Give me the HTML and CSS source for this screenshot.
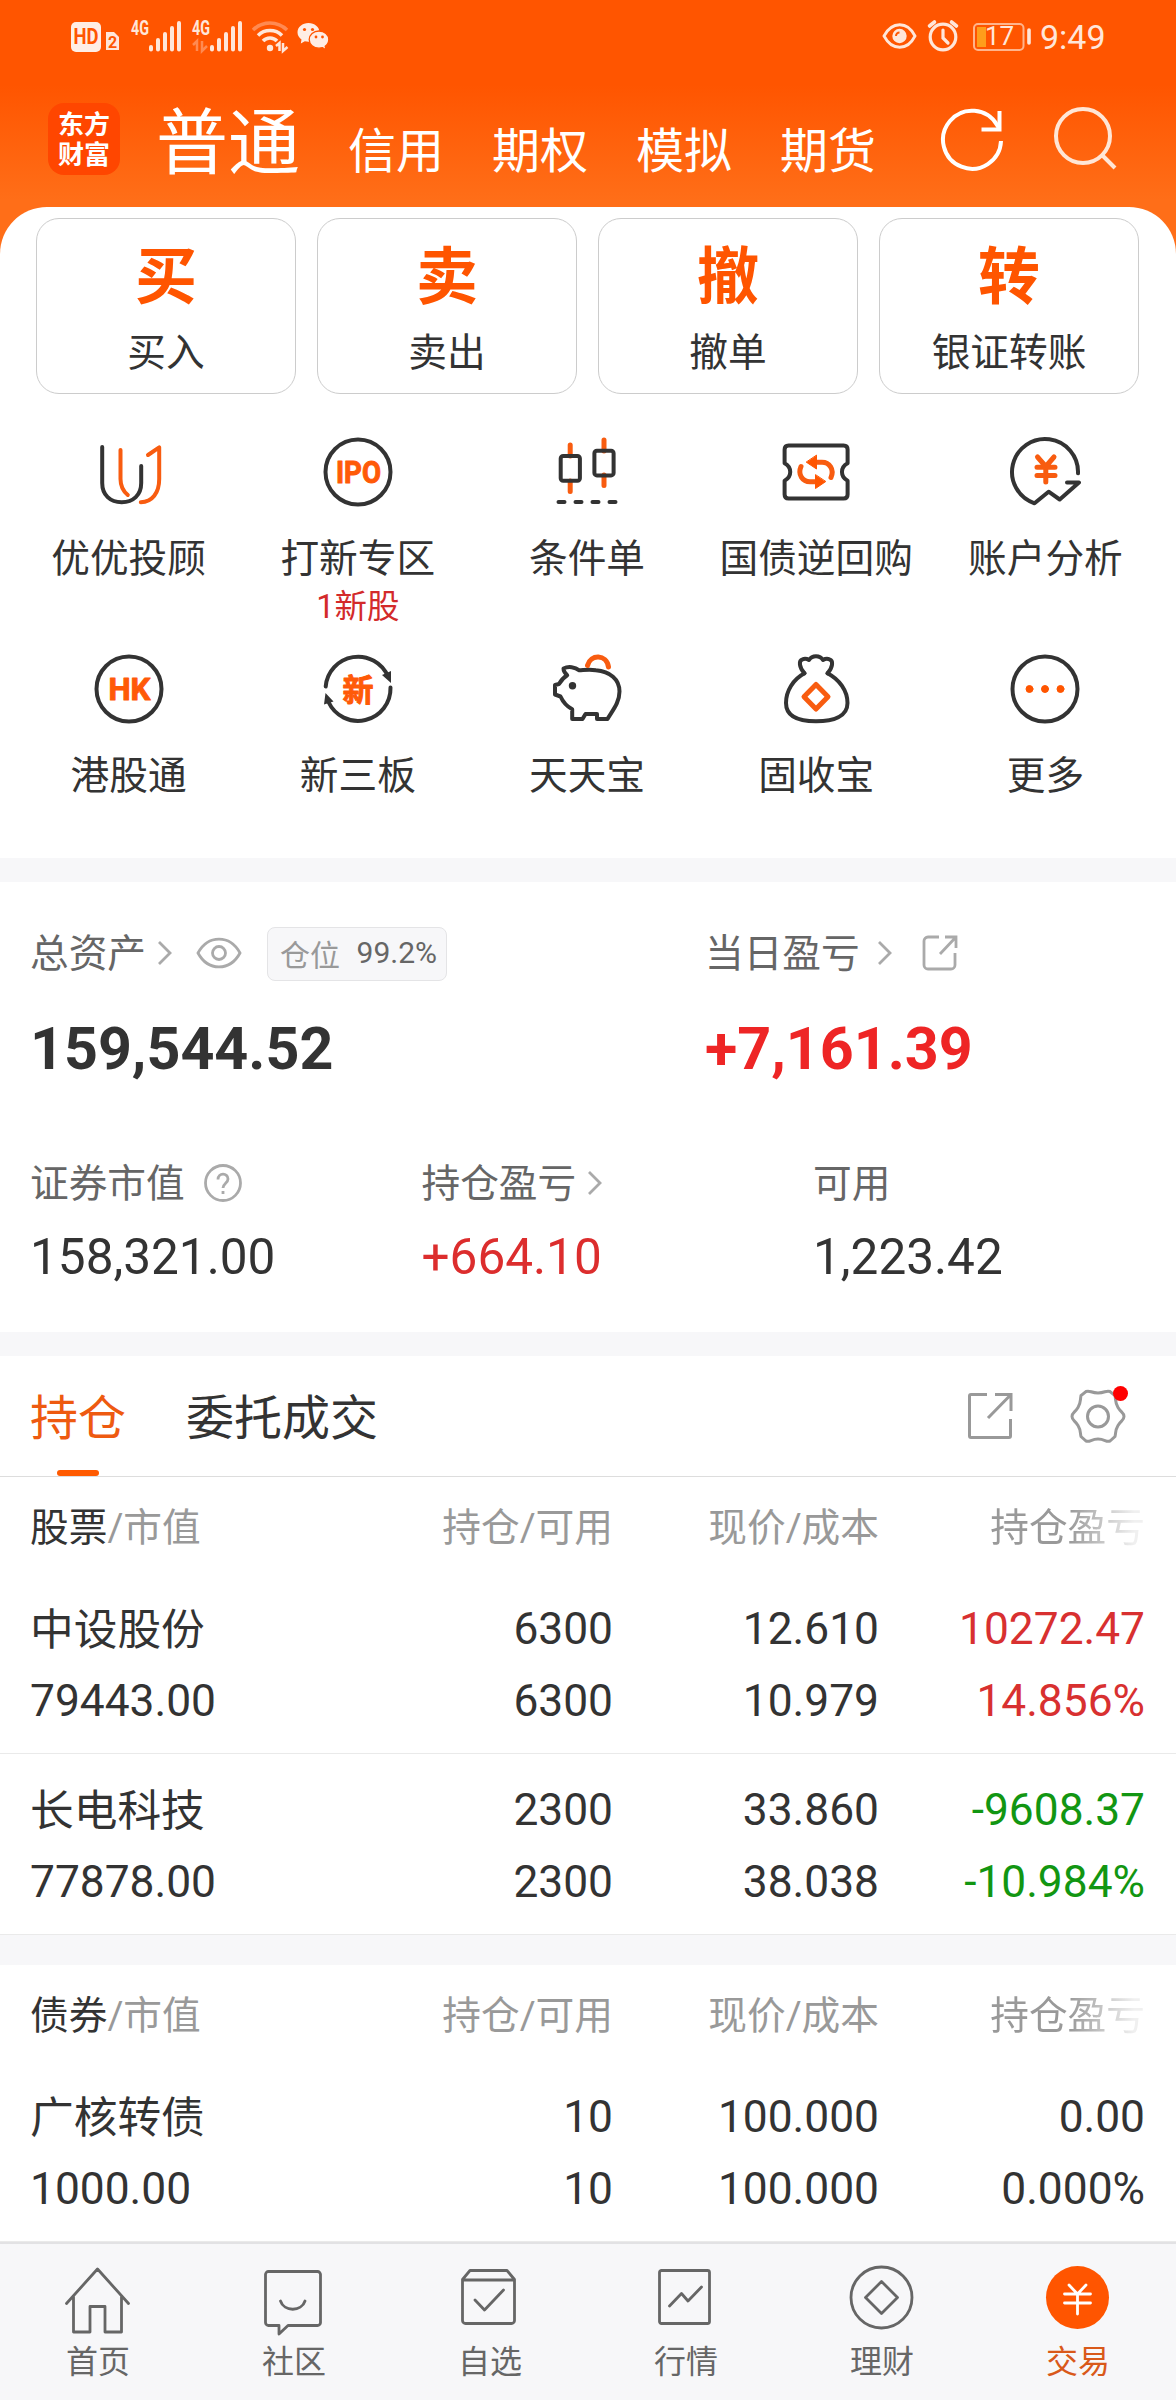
FILE: index.html
```html
<!DOCTYPE html>
<html lang="zh-CN">
<head>
  <meta charset="UTF-8" />
  <meta name="viewport" content="width=device-width, initial-scale=1.0" />
  <title>交易</title>
  <link rel="stylesheet" href="styles.css">
</head>
<body>
<div class="page">

  <div class="status-bar">
    <svg width="262" height="36" viewBox="70 18 262 36">
      <rect x="71" y="22" width="30" height="30" rx="5" fill="#ffeee5"/>
      <text x="73.500" y="44" class="st-hd" textLength="25" lengthAdjust="spacingAndGlyphs">HD</text>
      <path d="M106 50V32h8l5 5v13z" fill="#ffe6d9"/>
      <text x="108" y="48" class="st-two">2</text>
      <g class="st-text">
        <text x="131" y="34.500" textLength="18" lengthAdjust="spacingAndGlyphs">4G</text>
        <text x="192" y="34.500" textLength="18" lengthAdjust="spacingAndGlyphs">4G</text>
      </g>
      <g stroke="#ffe6d9" stroke-width="4" stroke-linecap="round">
        <path d="M151 47v2.500M158 40v9.500M165 34v15.500M172 28v21.500M179 23v26.500"/>
        <path d="M212 47v2.500M219 40v9.500M226 34v15.500M233 28v21.500M240 23v26.500"/>
      </g>
      <path d="M193 45l4-4v10M202 41v10l5-5" fill="none" stroke="#ff8a52" stroke-width="2.500"/>
      <g fill="none" stroke="#ffe6d9" stroke-width="3.500">
        <path d="M253 30a24 24 0 0 1 34 0" stroke="#ff8a52"/>
        <path d="M258 35.500a17 17 0 0 1 24 0"/>
        <path d="M263 41a9.500 9.500 0 0 1 14 0"/>
        <path d="M276 46l3.500-3v8M283 43v8l4.500-4" stroke-width="2.500"/>
      </g>
      <circle cx="270" cy="48" r="3.200" fill="#ffe6d9"/>
      <path d="M308.500 23c-6 0-11 4-11 9.300 0 3 1.500 5.500 4 7.200l-.7 4 4-2.300c1.200.3 2.500.5 3.700.5 6 0 11-4.200 11-9.400 0-5.300-5-9.300-11-9.300z" fill="#ffeee5"/>
      <path d="M319 31c-5.500 0-9.800 3.800-9.800 8.600s4.300 8.600 9.800 8.600c1.200 0 2.400-.2 3.500-.5l3.500 2-.8-3.400c2.200-1.600 3.600-4 3.600-6.700 0-4.800-4.300-8.600-9.800-8.600z" fill="#ffeee5" stroke="#ff5500" stroke-width="1.300"/>
      <g fill="#ff5500"><circle cx="304.500" cy="29.500" r="1.600"/><circle cx="312.500" cy="29.500" r="1.600"/><circle cx="316" cy="37" r="1.400"/><circle cx="322.500" cy="37" r="1.400"/></g>
    </svg>
    <div class="status-right">
      <svg width="152" height="36" viewBox="880 18 152 36" fill="none" stroke="#ffe6d9">
        <path d="M884 36c8-15 23.500-15 31 0-7.500 15-23 15-31 0z" stroke-width="2.800"/>
        <circle cx="899.500" cy="36" r="7.200" fill="#ffe6d9" stroke="none"/>
        <path d="M896 36a3.500 3.500 0 0 1 3.500-3.500" stroke="#ff5500" stroke-width="2"/>
        <circle cx="943" cy="37" r="12.800" stroke-width="3.200"/>
        <path d="M943 30v8l5 5" stroke-width="3.200" stroke-linecap="round"/>
        <path d="M929.500 26l5-4M956.500 26l-5-4" stroke-width="3.600" stroke-linecap="round"/>
        <rect x="974" y="24" width="49.500" height="26" rx="4" stroke="#ffb48c" stroke-width="2"/>
        <rect x="977" y="27" width="9" height="20" fill="#ff9e1b" stroke="none"/>
        <path d="M1029 30v13" stroke-width="3.600" stroke-linecap="round"/>
        <text x="985" y="45" class="st-bat">17</text>
      </svg>
      <span class="clock">9:49</span>
    </div>
  </div>

  <div class="header">
    <div class="logo"><span>东方</span><span>财富</span></div>
    <div class="modes">
      <span class="mode current">普通</span>
      <span class="mode">信用</span>
      <span class="mode">期权</span>
      <span class="mode">模拟</span>
      <span class="mode">期货</span>
    </div>
    <svg class="refresh" width="66" height="66" viewBox="939 107 66 66" fill="none" stroke="#fff" stroke-width="4">
      <path d="M1001 141a29 29 0 1 1-4-16l2.500 4"/>
      <path d="M999.500 111v18.500h-18"/>
    </svg>
    <svg class="search" width="66" height="66" viewBox="1053 105 66 66" fill="none" stroke="#ffe6d6" stroke-width="4">
      <ellipse cx="1083" cy="136" rx="27" ry="27"/>
      <path d="M1102 155l13 13"/>
    </svg>
  </div>

  <div class="panel">
    <div class="cards">
      <div class="card"><b>买</b><span>买入</span></div>
      <div class="card"><b>卖</b><span>卖出</span></div>
      <div class="card"><b>撤</b><span>撤单</span></div>
      <div class="card"><b>转</b><span>银证转账</span></div>
    </div>

    <div class="menu">
      <div class="menu-item">
        <svg class="ico" viewBox="0 0 72 72">
          <path d="M9.200 11v36c0 12 8 19.300 19.500 19.300S48.200 59 48.200 47V30"/>
          <path class="o" d="M27.500 14v29c0 7 2.500 12 7.300 16"/>
          <path class="o" d="M55 19l11.200-7.700V43c0 14-7 23-18.400 23.300"/>
        </svg>
        <span>优优投顾</span>
      </div>
      <div class="menu-item">
        <svg class="ico" viewBox="0 0 72 72">
          <circle cx="36" cy="36" r="32.500"/>
          <text class="ico-text" x="14" y="47" textLength="45" lengthAdjust="spacingAndGlyphs">IPO</text>
        </svg>
        <span>打新专区</span>
        <em>1新股</em>
      </div>
      <div class="menu-item">
        <svg class="ico" viewBox="0 0 72 72">
          <path class="o wick" d="M19.200 9v11M19.200 45v10.500M53 4v11M53 39v10.500"/>
          <rect x="9.700" y="20" width="19.200" height="24.700" rx="2.500"/>
          <rect x="43.400" y="14.700" width="19.200" height="24.700" rx="2.500"/>
          <path d="M7.500 66h6M24.500 66h6M41.500 66h6M58.500 66h6"/>
        </svg>
        <span>条件单</span>
      </div>
      <div class="menu-item">
        <svg class="ico" viewBox="0 0 72 72">
          <path d="M8.600 9.500h55c2.500 0 4 1.500 4 4v13.800c-7.500 4-7.500 13.400 0 17.400v13.800c0 2.500-1.500 4-4 4h-55c-2.500 0-4-1.500-4-4V44.700c7.500-4 7.500-13.400 0-17.400V13.500c0-2.500 1.500-4 4-4z"/>
          <path class="o fat" d="M51 41.500c3.500-8-1.500-15.200-9-15.200h-7M21 30.500c-3.500 8 1.500 15.200 9 15.200h7"/>
          <path class="of" d="M36.500 19.500v13.500l-10-6.700zM35.500 39v13.500l10-6.800z"/>
        </svg>
        <span>国债逆回购</span>
      </div>
      <div class="menu-item">
        <svg class="ico" viewBox="0 0 72 72">
          <path d="M69 37.300A33 33 0 1 0 25.500 67.300L39.600 55.700 50.700 63.500 70 46.500H58"/>
          <path class="o fat" d="M28.500 21l8.300 9.500L45 21M28 31.200h18M28 39.500h18M36.800 31v15"/>
        </svg>
        <span>账户分析</span>
      </div>
    </div>
    <div class="menu">
      <div class="menu-item">
        <svg class="ico" viewBox="0 0 72 72">
          <circle cx="36" cy="36" r="32.500"/>
          <text class="ico-text" x="15.500" y="47" textLength="42" lengthAdjust="spacingAndGlyphs">HK</text>
        </svg>
        <span>港股通</span>
      </div>
      <div class="menu-item">
        <svg class="ico" viewBox="0 0 72 72">
          <path d="M3.700 33.500A32.500 32.500 0 0 1 66 23.500M68.500 34.500A32.500 32.500 0 0 1 6.500 49"/>
          <path class="df" d="M60 22l9-4v12zM3.500 40l8 8.500-9.500 3z"/>
          <text class="ico-text cjk" x="20.500" y="47.500">新</text>
        </svg>
        <span>新三板</span>
      </div>
      <div class="menu-item">
        <svg class="ico" viewBox="0 0 72 72">
          <path d="M12.500 15.500c5-2.500 11.500-1.500 15.800 1.800 6-.3 11-1 16.500 0C59 18.500 68.500 26 68.500 38.500 68.500 50 61 58 56.500 66H46v-5H34.500l-3 5H21.200V56.300C16 53.500 12 49 9.500 43.500L4 41.500V32l4-1c2-3.500 4.500-6.500 8.200-8.800-2.200-2-3.700-4.200-3.700-6.700z"/>
          <path class="o fat" d="M36.500 12.500c3-11.500 19-11.500 21 1.500"/>
          <circle class="df" cx="21.500" cy="32.700" r="3.700"/>
        </svg>
        <span>天天宝</span>
      </div>
      <div class="menu-item">
        <svg class="ico" viewBox="0 0 72 72">
          <path d="M24.500 20.300C19 14 18.500 7.500 22.500 6.300c2-.8 4.500-.5 6.500.7 3-5 11-5 14 0 2-1.200 4.500-1.500 6.500-.7 4 1.200 3.500 7.700-2 14"/>
          <path d="M24.500 20.300C13 26.500 6 38 6 50c0 13.500 12.500 18.300 30 18.300S67.500 63.500 67.500 50c0-12-8-23.500-20-29.700"/>
          <path class="o fat" d="M36 31.500L48 43.700 36 56 24 43.700z"/>
        </svg>
        <span>固收宝</span>
      </div>
      <div class="menu-item">
        <svg class="ico" viewBox="0 0 72 72">
          <circle cx="36" cy="36" r="32.500"/>
          <g class="of"><circle cx="20.500" cy="36" r="3.500"/><circle cx="36" cy="36" r="3.500"/><circle cx="51.500" cy="36" r="3.500"/></g>
        </svg>
        <span>更多</span>
      </div>
    </div>
  </div>

  <div class="assets">
    <div class="assets-top">
      <div class="total">
        <div class="label">总资产
          <svg class="chev" width="16" height="26" viewBox="0 0 16 26"><path d="M2 2l11 11L2 24"/></svg>
          <svg class="eye" width="46" height="32" viewBox="0 0 46 32"><path d="M2 16C12-2.500 34-2.500 44 16 34 34.500 12 34.500 2 16z"/><circle cx="23" cy="16" r="6.500"/></svg>
          <span class="pill">仓位<i>99.2%</i></span>
        </div>
        <div class="big">159,544.52</div>
      </div>
      <div class="today">
        <div class="label">当日盈亏
          <svg class="chev day" width="16" height="26" viewBox="0 0 16 26"><path d="M2 2l11 11L2 24"/></svg>
          <svg class="share" width="36" height="36" viewBox="0 0 36 36"><path d="M17 2H6a4 4 0 0 0-4 4v24a4 4 0 0 0 4 4h23a4 4 0 0 0 4-4V18M23 2h11v11M34 2L18 19"/></svg>
        </div>
        <div class="big red">+7,161.39</div>
      </div>
    </div>
    <div class="assets-bottom">
      <div>
        <div class="label">证券市值
          <svg class="help" width="40" height="40" viewBox="0 0 40 40"><circle cx="20" cy="20" r="17.500"/><path d="M15 16.500c0-7 10-7 10-.5 0 4-5 4.500-5 9"/><path d="M20 28v3"/></svg>
        </div>
        <div class="mid">158,321.00</div>
      </div>
      <div>
        <div class="label">持仓盈亏
          <svg class="chev near" width="16" height="26" viewBox="0 0 16 26"><path d="M2 2l11 11L2 24"/></svg>
        </div>
        <div class="mid red">+664.10</div>
      </div>
      <div>
        <div class="label">可用</div>
        <div class="mid">1,223.42</div>
      </div>
    </div>
  </div>

  <div class="tabs">
    <span class="tab active">持仓</span>
    <span class="tab">委托成交</span>
    <svg class="tab-share" width="46" height="48" viewBox="0 0 46 48"><path d="M20 2.500H4a1.500 1.500 0 0 0-1.500 1.500v40A1.500 1.500 0 0 0 4 45.500h38a1.500 1.500 0 0 0 1.500-1.500V27M28 2.500h16V19M43.500 3L21 26"/></svg>
    <svg class="gear" width="64" height="64" viewBox="0 0 64 64">
      <path d="M19 7.500c4-1.500 5 1.500 12 1.500s8-3 12-1.500l5 4c1 5 0 7 3 12s6 5 6 9-3 4-6 9-2 7-3 11l-5 4.500c-4 1.500-5-2-12-2s-8 3.500-12 2l-5-4.500c-1-4 0-6-3-11s-6-5-6-9 3-4 6-9 2-7 3-12z"/>
      <circle cx="31" cy="32.500" r="10.500"/>
      <circle class="dot" cx="53.500" cy="9.500" r="7.500"/>
    </svg>
  </div>

  <div class="table">
    <div class="thead"><span><b>股票</b>/市值</span><span>持仓/可用</span><span>现价/成本</span><span class="fade">持仓盈亏</span></div>
    <div class="row">
      <span class="name">中设股份</span><span>6300</span><span>12.610</span><span class="up">10272.47</span>
      <span>79443.00</span><span>6300</span><span>10.979</span><span class="up">14.856%</span>
    </div>
    <div class="row">
      <span class="name">长电科技</span><span>2300</span><span>33.860</span><span class="down">-9608.37</span>
      <span>77878.00</span><span>2300</span><span>38.038</span><span class="down">-10.984%</span>
    </div>
  </div>

  <div class="table bonds">
    <div class="thead"><span><b>债券</b>/市值</span><span>持仓/可用</span><span>现价/成本</span><span class="fade">持仓盈亏</span></div>
    <div class="row">
      <span class="name">广核转债</span><span>10</span><span>100.000</span><span>0.00</span>
      <span>1000.00</span><span>10</span><span>100.000</span><span>0.000%</span>
    </div>
  </div>

  <div class="nav">
    <div class="nav-item">
      <svg viewBox="0 0 66 66"><path d="M1.500 37.500L32.500 3l31 34.500M8.500 31v35H25V40.500h15V66h16.500V31"/></svg>
      <span>首页</span>
    </div>
    <div class="nav-item">
      <svg viewBox="0 0 66 66"><path d="M7.500 5.500h49a3 3 0 0 1 3 3v48a3 3 0 0 1-3 3H27l-9 8.500v-8.500H7.500a3 3 0 0 1-3-3v-48a3 3 0 0 1 3-3zM19.500 35c3.500 11 21 11 24.500 0"/></svg>
      <span>社区</span>
    </div>
    <div class="nav-item">
      <svg viewBox="0 0 66 66"><path d="M5.500 13.500L13 4.500h37l7.500 9v41a3 3 0 0 1-3 3h-46a3 3 0 0 1-3-3zM5.500 14h52M18 34l9.500 10L46.500 24"/></svg>
      <span>自选</span>
    </div>
    <div class="nav-item">
      <svg viewBox="0 0 66 66"><rect x="6.500" y="4.500" width="50" height="53" rx="2"/><path d="M16.500 40l12-12.500 6.500 7.500 13.500-14"/></svg>
      <span>行情</span>
    </div>
    <div class="nav-item">
      <svg viewBox="0 0 66 66"><circle cx="32.500" cy="31.500" r="30.500"/><path d="M32.500 15.500l16 16-16 16-16-16z"/></svg>
      <span>理财</span>
    </div>
    <div class="nav-item on">
      <svg viewBox="0 0 66 66"><circle cx="32.500" cy="31.500" r="31.500" fill="#ff5500" stroke="none"/><path d="M24 19l8.500 9 8.500-9M19.500 28h26M19.500 37h26M32.500 28v20" stroke="#fff"/></svg>
      <span>交易</span>
    </div>
  </div>
</div>
</body>
</html>
```

FILE: styles.css
```css
* {
  box-sizing: border-box;
}

body {
  margin: 0;
  background: #fff;
  font-family: Roboto, "Noto Sans CJK SC", sans-serif;
  color: #333;
}

.page {
  width: 1176px;
  height: 2400px;
  display: flex;
  flex-direction: column;
  overflow: hidden;
  background: linear-gradient(#ff5500 85px, #ff6e18 200px);
}

svg {
  display: block;
  flex: none;
}

i, em {
  font-style: normal;
}

/* status bar */
.status-bar {
  height: 72px;
  padding: 0 70px;
  display: flex;
  justify-content: space-between;
  align-items: center;
}

.status-right {
  display: flex;
  align-items: center;
  gap: 8px;
  width: 226px;
}

.clock {
  padding-top: 2px;
  font-size: 34px;
  line-height: 36px;
  color: #ffe6d9;
}

.st-hd {
  font-size: 22px;
  font-weight: 700;
  fill: #ff5500;
}

.st-two {
  font-size: 16px;
  font-weight: 700;
  fill: #ff5500;
}

.st-text {
  font-size: 20px;
  font-weight: 700;
  fill: #ffe6d9;
}

.st-bat {
  font-size: 26px;
  fill: #ffe6d9;
  stroke: none;
}

/* header */
.header {
  height: 135px;
  padding-left: 48px;
  display: flex;
  align-items: flex-start;
  color: #fff;
}

.logo {
  width: 72px;
  height: 72px;
  margin-top: 31px;
  border-radius: 16px;
  background: #ff4600;
  display: flex;
  flex-direction: column;
  align-items: center;
  justify-content: center;
  padding-top: 2px;
  font-size: 26px;
  line-height: 30px;
  font-weight: 700;
}

.modes {
  margin: 22px 0 0 36px;
  display: flex;
  align-items: baseline;
  gap: 48px;
}

.mode {
  font-size: 48px;
  line-height: 100px;
}

.current {
  font-size: 72px;
}

.refresh {
  margin: 35px 0 0 63px;
}

.search {
  margin: 33px 0 0 48px;
}

/* shortcuts */
.panel {
  height: 651px;
  padding-top: 11px;
  background: #fff;
  border-radius: 47px 47px 0 0;
}

.cards {
  display: flex;
  gap: 21px;
  padding: 0 36px;
}

.card {
  width: 260px;
  height: 176px;
  border: 1px solid #ccc;
  border-radius: 23px;
  display: flex;
  flex-direction: column;
  align-items: center;
}

.card b {
  margin-top: 24px;
  font-size: 62px;
  line-height: 70px;
  color: #ff5500;
}

.card span {
  margin-top: 15px;
  font-size: 38.7px;
  line-height: 50px;
}

.menu {
  display: flex;
  height: 217px;
  padding: 0 16px 0 14px;
}

.cards + .menu {
  margin-top: 42px;
}

.menu-item {
  flex: 1;
  display: flex;
  flex-direction: column;
  align-items: center;
  white-space: nowrap;
}

.menu-item span {
  margin-top: 26px;
  font-size: 38.7px;
  line-height: 50px;
}

.menu-item em {
  font-size: 32.5px;
  line-height: 46px;
  color: #d32a2a;
}

.ico {
  width: 72px;
  height: 72px;
  fill: none;
  stroke: #333;
  stroke-width: 4;
  stroke-linecap: round;
  stroke-linejoin: round;
}

.ico .o {
  stroke: #f85c10;
}

.ico .fat,
.ico .wick {
  stroke-width: 5;
}

.ico .of {
  fill: #ff5500;
  stroke: #ff5500;
  stroke-width: 1;
}

.ico .df {
  fill: #333;
  stroke: none;
}

.ico-text {
  font-size: 31px;
  font-weight: 700;
  fill: #ff5a08;
  stroke: #ff5a08;
  stroke-width: 1;
}

/* assets */
.assets {
  height: 498px;
  border-top: 24px solid #f7f7f9;
  border-bottom: 24px solid #f7f7f9;
  background: #fff;
  padding: 38px 0 0 30px;
}

.assets-top {
  display: flex;
  height: 234px;
}

.total {
  width: 675px;
}

.label {
  display: flex;
  align-items: center;
  height: 60px;
  font-size: 38.7px;
  color: #666;
}

.label svg {
  margin-top: 6px;
  fill: none;
  stroke: #aaa;
  stroke-width: 2.8;
}

.chev {
  margin-left: 11px;
}

.chev.day {
  margin-left: 17px;
}

.eye {
  margin-left: 23px;
}

.share {
  margin-left: 29px;
}

.help {
  margin-left: 18px;
}

.pill {
  margin: 7px 0 0 25px;
  width: 180px;
  height: 54px;
  border: 1px solid #e4e4e6;
  border-radius: 8px;
  background: #f7f7f9;
  display: flex;
  justify-content: space-between;
  align-items: center;
  padding: 0 9px 2px 12px;
  font-size: 30px;
  color: #999;
}

.pill i {
  color: #666;
}

.big {
  margin-top: 33px;
  font-size: 59.2px;
  line-height: 72px;
  font-weight: 700;
}

.big.red {
  color: #ee2525;
}

.mid {
  margin-top: 17px;
  font-size: 49.5px;
  line-height: 60px;
}

.mid.red {
  color: #dc2d2d;
}

.assets-bottom {
  display: flex;
  margin-top: -4px;
}

.assets-bottom > div {
  flex: none;
  width: 391.500px;
}

/* tabs */
.tabs {
  flex: none;
  height: 121px;
  padding-left: 30px;
  border-bottom: 1px solid #ddd;
  background: #fff;
  display: flex;
  align-items: center;
}

.tab {
  position: relative;
  margin-right: 60px;
  padding-top: 5px;
  font-size: 48px;
  line-height: 115px;
}

.tab.active {
  color: #ee5a10;
}

.tab.active::after {
  content: "";
  position: absolute;
  left: 27px;
  bottom: 0;
  width: 42px;
  height: 6px;
  border-radius: 3px;
  background: #ff5a00;
}

.tab-share {
  margin-left: 529px;
  fill: none;
  stroke: #999;
  stroke-width: 3;
}

.gear {
  margin-left: 54px;
  fill: none;
  stroke: #999;
  stroke-width: 3;
}

.gear .dot {
  fill: #f00;
  stroke: none;
}

/* positions */
.table {
  background: #fff;
}

.thead,
.row {
  display: grid;
  grid-template-columns: 261px 322px 266px 266px;
  padding-left: 30px;
}

.thead span,
.row span {
  text-align: right;
  white-space: nowrap;
}

.thead span:first-child,
.row span:nth-child(4n + 1) {
  text-align: left;
}

.thead {
  height: 99px;
  font-size: 38.7px;
  line-height: 102px;
  color: #999;
}

.thead b {
  font-weight: 400;
  color: #333;
}

.fade {
  -webkit-mask-image: linear-gradient(to right, #000 190px, rgba(0, 0, 0, .15) 255px);
  mask-image: linear-gradient(to right, #000 190px, rgba(0, 0, 0, .15) 255px);
}

.row {
  height: 181px;
  padding-top: 20px;
  grid-auto-rows: 72px;
  border-bottom: 1px solid #eaeaea;
  font-size: 44.3px;
  line-height: 72px;
}

.thead + .row {
  height: 178px;
  padding-top: 17px;
}

.row .name {
  padding-top: 1px;
  font-size: 43.7px;
}

.up {
  color: #d83030;
}

.down {
  color: #129612;
}

.bonds {
  border-top: 30px solid #f7f7f9;
}

/* bottom nav */
.nav {
  margin-top: auto;
  flex: none;
  height: 158px;
  padding-top: 22px;
  border-top: 2px solid #e2e2e4;
  background: #f7f7f9;
  display: flex;
}

.nav-item {
  flex: 1;
  display: flex;
  flex-direction: column;
  align-items: center;
  font-size: 32px;
  line-height: 40px;
  color: #666;
}

.nav-item svg {
  width: 66px;
  height: 66px;
  overflow: visible;
  margin-bottom: 10px;
  fill: none;
  stroke: #666;
  stroke-width: 2.8;
  stroke-linecap: round;
  stroke-linejoin: round;
}

.nav-item.on {
  color: #d9591a;
}
```
